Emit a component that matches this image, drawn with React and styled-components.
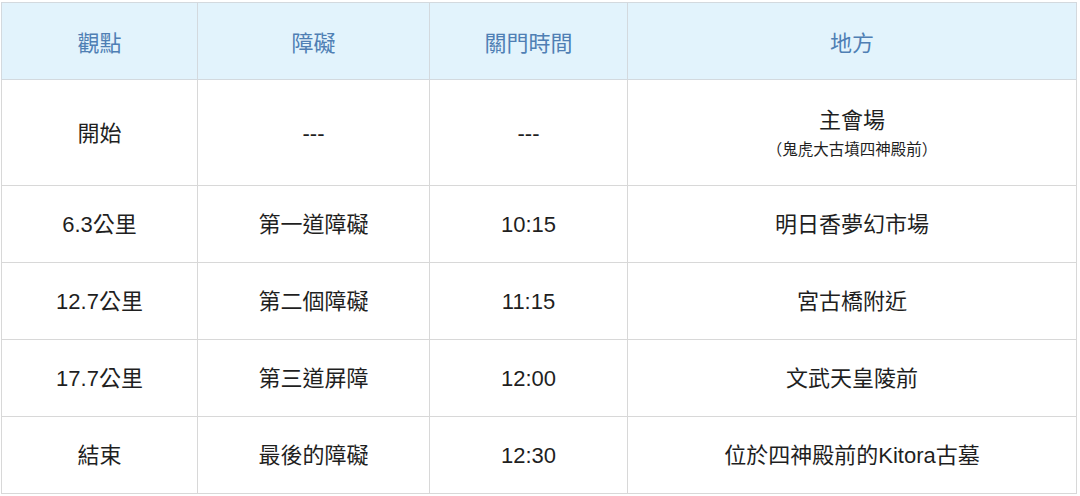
import styled, { createGlobalStyle } from "styled-components";

const GlobalStyle = createGlobalStyle`
  body {
    margin: 0;
    background: #fff;
    font-family: "Liberation Sans", "Noto Sans CJK TC", sans-serif;
  }
`;

const rows = [
  { point: "開始", barrier: "---", time: "---", place: "主會場", note: "（鬼虎大古墳四神殿前）", tall: true },
  { point: "6.3公里", barrier: "第一道障礙", time: "10:15", place: "明日香夢幻市場" },
  { point: "12.7公里", barrier: "第二個障礙", time: "11:15", place: "宮古橋附近" },
  { point: "17.7公里", barrier: "第三道屏障", time: "12:00", place: "文武天皇陵前" },
  { point: "結束", barrier: "最後的障礙", time: "12:30", place: "位於四神殿前的Kitora古墓" },
];

function App() {
  return (
    <Page>
      <GlobalStyle />
      <Table>
        <colgroup>
          <col style={{ width: 196 }} />
          <col style={{ width: 232 }} />
          <col style={{ width: 198 }} />
          <col />
        </colgroup>
        <thead>
          <tr>
            <Th>觀點</Th>
            <Th>障礙</Th>
            <Th>關門時間</Th>
            <Th>地方</Th>
          </tr>
        </thead>
        <tbody>
          {rows.map((r) => (
            <Row key={r.point} $tall={r.tall}>
              <Td>{r.point}</Td>
              <Td>{r.barrier}</Td>
              <Td>{r.time}</Td>
              <Td>
                {r.place}
                {r.note && <Note>{r.note}</Note>}
              </Td>
            </Row>
          ))}
        </tbody>
      </Table>
    </Page>
  );
}

const Page = styled.div`
  padding: 2px 3px 2px 1px;
`;

const Table = styled.table`
  width: 1076px;
  border-collapse: collapse;
  table-layout: fixed;
  border: 1px solid #d8d8d8;
`;

const Th = styled.th`
  height: 76px;
  padding: 0;
  background: #e2f3fc;
  color: #4f7fb4;
  font-weight: normal;
  font-size: 22px;
  text-align: center;
  border: 1px solid #d3d9de;
`;

const Row = styled.tr`
  height: ${(p) => (p.$tall ? "106px" : "77px")};
`;

const Td = styled.td`
  padding: 3px 0 0;
  color: #1f1f1f;
  font-size: 22px;
  line-height: 1.2;
  text-align: center;
  vertical-align: middle;
  border: 1px solid #d8d8d8;
`;

const Note = styled.div`
  font-size: 15.5px;
  margin-top: 7px;
`;

export default App;
